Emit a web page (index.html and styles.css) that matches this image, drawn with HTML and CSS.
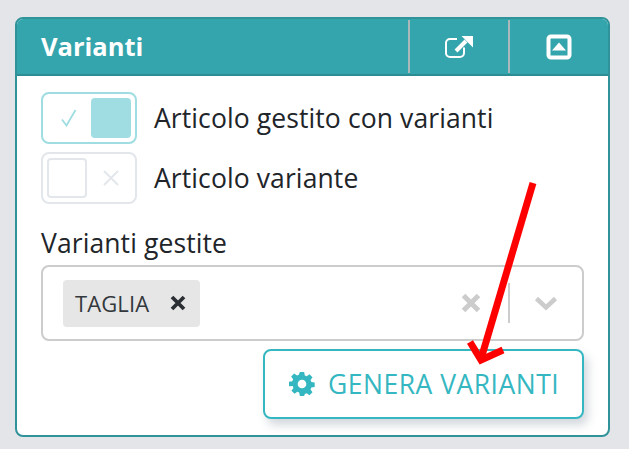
FILE: index.html
```html
<!DOCTYPE html>
<html lang="it">
<head>
<meta charset="utf-8">
<title>Varianti</title>
<link rel="stylesheet" href="styles.css">
</head>
<body>
<section class="card">
  <header class="card-header">
    <h2 class="card-title">Varianti</h2>
    <div class="header-action">
      <svg class="icon-open" width="30" height="26" viewBox="0 0 30 26"><path d="M20 13.500V19a4 4 0 0 1-4 4H6a4 4 0 0 1-4-4V9a4 4 0 0 1 4-4h7" fill="none" stroke="#fff" stroke-width="2"/><path d="M12 17l10-10" stroke="#fff" stroke-width="4" fill="none"/><path d="M17.500 2H29V13.500Z" fill="#fff"/></svg>
    </div>
    <div class="header-action">
      <svg width="26" height="26" viewBox="0 0 26 26"><rect x="2.500" y="2.500" width="21" height="21" rx="2.500" fill="none" stroke="#fff" stroke-width="4"/><path d="M13 8.500l7 8H6z" fill="#fff"/></svg>
    </div>
  </header>
  <div class="card-body">
    <div class="switch-row">
      <div class="switch switch-on">
        <svg class="switch-mark" width="18" height="18" viewBox="0 0 18 18"><path d="M2 10.500l4.500 6L15.500 1" fill="none" stroke="#9fdde2" stroke-width="1.800"/></svg>
        <span class="knob knob-on"></span>
      </div>
      <span class="switch-label">Articolo gestito con varianti</span>
    </div>
    <div class="switch-row">
      <div class="switch switch-off">
        <span class="knob knob-off"></span>
        <svg class="switch-mark" width="18" height="18" viewBox="0 0 18 18"><path d="M2 2l14 14M16 2L2 16" fill="none" stroke="#e3e6ea" stroke-width="1.800"/></svg>
      </div>
      <span class="switch-label">Articolo variante</span>
    </div>
    <label class="field-label">Varianti gestite</label>
    <div class="select">
      <div class="tag"><span>TAGLIA</span>
        <svg width="16" height="16" viewBox="0 0 16 16"><path d="M2 2l12 12M14 2L2 14" stroke="#2b2f33" stroke-width="3.800" fill="none"/></svg>
      </div>
      <div class="select-tools">
        <svg width="20" height="20" viewBox="0 0 20 20"><path d="M2.500 2.500l15 15M17.500 2.500l-15 15" stroke="#cccccc" stroke-width="5" fill="none"/></svg>
        <span class="select-divider"></span>
        <svg class="chevron" width="24" height="15" viewBox="0 0 24 15"><path d="M2.500 2.500l9.500 9 9.500-9" stroke="#cccccc" stroke-width="4.500" fill="none"/></svg>
      </div>
    </div>
    <div class="actions">
      <button class="btn" type="button">
        <svg width="26" height="26" viewBox="0 0 24 24"><path fill="#35b7c1" fill-rule="evenodd" d="M10 1h4l.6 3.100 1.700.7 2.600-1.800 2.800 2.800-1.800 2.600.7 1.700 3.100.6v4l-3.100.6-.7 1.700 1.800 2.600-2.800 2.800-2.600-1.800-1.700.7L14 23h-4l-.6-3.100-1.700-.7-2.600 1.800-2.800-2.800 1.800-2.600-.7-1.700L0 14v-4l3.100-.6.7-1.700L2 5.100l2.800-2.800 2.600 1.800 1.700-.7zM12 8a4 4 0 1 0 0 8 4 4 0 0 0 0-8z"/></svg>
        <span>GENERA VARIANTI</span>
      </button>
    </div>
  </div>
  <svg class="arrow" width="90" height="200" viewBox="0 0 90 200"><path d="M74 2L22 178" stroke="#ff0000" stroke-width="7" fill="none"/><path d="M11 161l11 18 22-10" stroke="#ff0000" stroke-width="7" fill="none"/></svg>
</section>
</body>
</html>
```
FILE: styles.css
```css
* { box-sizing: border-box; }
html, body { height: 100%; }
body {
  margin: 0;
  padding: 17px 19px 12px 15px;
  background: #e4e5e8;
  font-family: "Open Sans", "Noto Sans", sans-serif;
  color: #212529;
  overflow: hidden;
}
.card {
  position: relative;
  height: 420px;
  background: #fff;
  border: 2px solid #31939a;
  border-radius: 8px;
  overflow: hidden;
}
.card-header {
  display: flex;
  align-items: stretch;
  height: 57px;
  background: #34a5ac;
  border-bottom: 2px solid #2e8d92;
  color: #fff;
}
.card-title {
  flex: 1;
  margin: 0;
  padding: 10px 0 0 24px;
  font-size: 25.500px;
  line-height: 34px;
  font-weight: 700;
}
.header-action {
  width: 100px;
  display: flex;
  align-items: center;
  justify-content: center;
  border-left: 2px solid #aab8ba;
  margin: 1px 0 1px;
}
.card-body { padding: 16px 24px 0; }
.switch-row {
  display: flex;
  align-items: center;
  gap: 17px;
  height: 52px;
  margin-bottom: 8px;
}
.switch {
  width: 96px;
  height: 52px;
  padding: 4px;
  border-radius: 8px;
  background: #fff;
  display: flex;
  align-items: center;
  justify-content: space-between;
}
.switch-on { border: 2px solid #9fdde2; }
.switch-off { border: 2px solid #e3e6ea; }
.switch-mark { margin: 0 19px; flex: none; }
.switch-on .switch-mark { margin: 0 0 0 13px; }
.switch-off .switch-mark { margin: 0 11px 0 0; }
.knob {
  width: 40px;
  height: 40px;
  border-radius: 4px;
  flex: none;
}
.knob-on { background: #9fdde2; }
.knob-off { border: 2px solid #e3e6ea; }
.switch-label {
  font-size: 26.500px;
  line-height: 36px;
  letter-spacing: 0.1px;
  color: #212529;
}
.field-label {
  display: block;
  margin-top: 22px;
  font-size: 26.500px;
  line-height: 34px;
  letter-spacing: 0.1px;
}
.select {
  display: flex;
  align-items: center;
  justify-content: space-between;
  height: 76px;
  margin-top: 5px;
  padding: 0 10px 0 20px;
  border: 2px solid #cccccc;
  border-radius: 8px;
}
.tag {
  display: flex;
  align-items: center;
  justify-content: space-between;
  width: 137px;
  height: 47px;
  padding: 0 14px 0 12px;
  border-radius: 4px;
  background: #e6e6e6;
  font-size: 22px;
  letter-spacing: 0.1px;
  color: #33383d;
}
.select-tools {
  display: flex;
  align-items: center;
  gap: 0;
}
.select-divider {
  width: 2px;
  height: 40px;
  margin: 0 24px 0 27px;
  background: #cccccc;
}
.chevron { margin-right: 14px; }
.actions {
  display: flex;
  justify-content: flex-end;
  margin-top: 8px;
}
.btn {
  display: flex;
  align-items: center;
  gap: 13px;
  width: 321px;
  height: 70px;
  padding: 0 0 0 24px;
  background: #fff;
  border: 2px solid #35b7c1;
  border-radius: 8px;
  box-shadow: 4px 6px 10px rgba(80, 100, 120, 0.25);
  color: #35b7c1;
  font-family: inherit;
  font-size: 26.500px;
  letter-spacing: 0.5px;
}
.arrow {
  position: absolute;
  left: 442px;
  top: 162px;
}
```
